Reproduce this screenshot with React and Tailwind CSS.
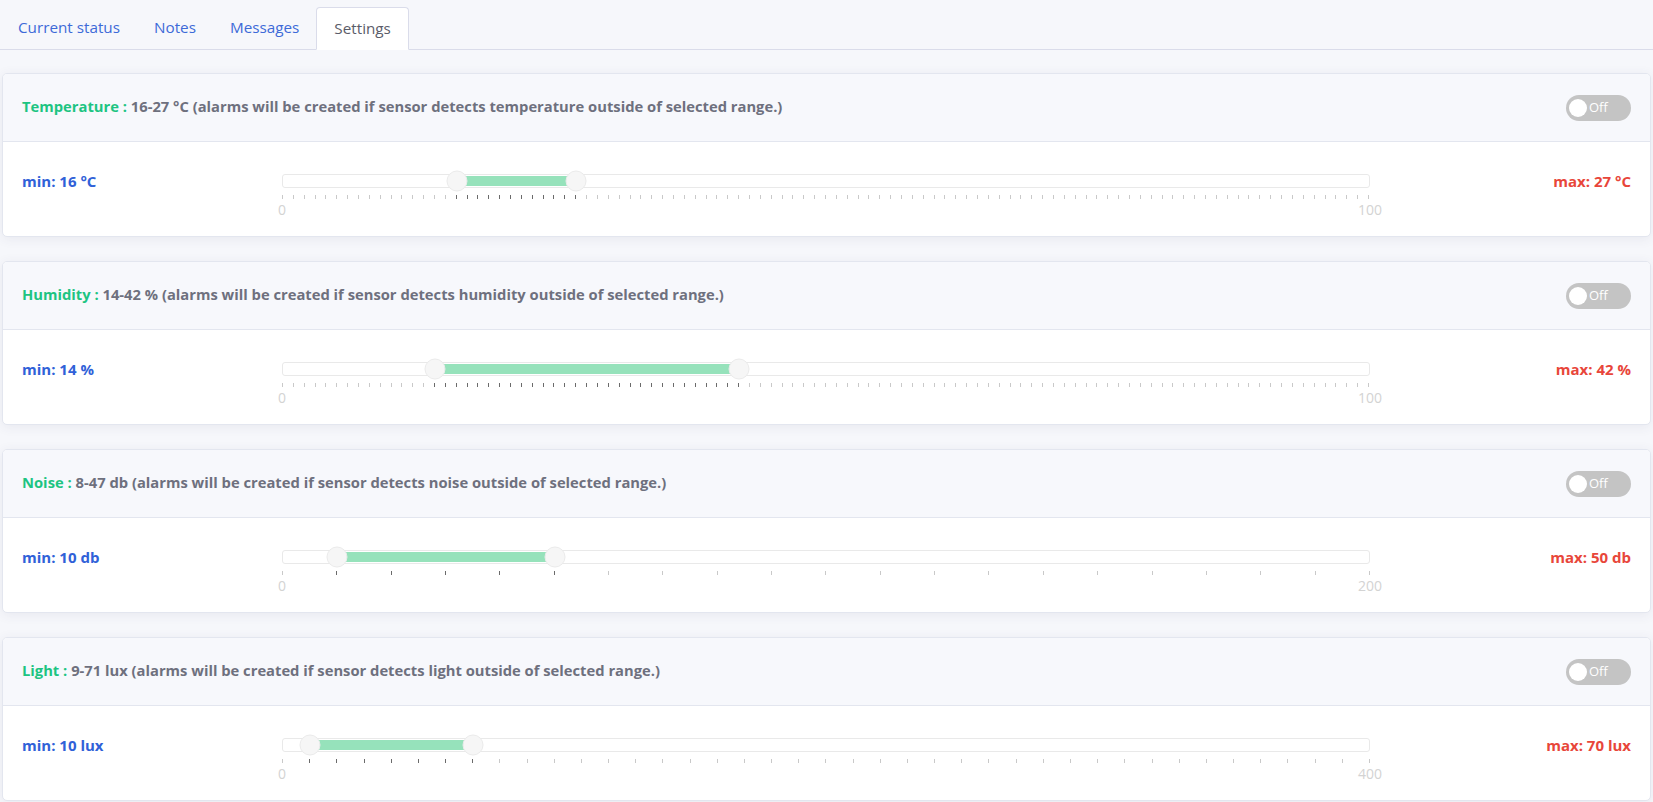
import React from "react";

const sensors = [
  { name: "Temperature", unit: "°C", rangeText: "16-27 °C", word: "temperature", min: 16, max: 27, lo: 16, hi: 27, scaleMax: 100, step: 1 },
  { name: "Humidity", unit: "%", rangeText: "14-42 %", word: "humidity", min: 14, max: 42, lo: 14, hi: 42, scaleMax: 100, step: 1 },
  { name: "Noise", unit: "db", rangeText: "8-47 db", word: "noise", min: 10, max: 50, lo: 10, hi: 50, scaleMax: 200, step: 10 },
  { name: "Light", unit: "lux", rangeText: "9-71 lux", word: "light", min: 10, max: 70, lo: 10, hi: 70, scaleMax: 400, step: 10 },
];

function Toggle() {
  return (
    <div className="flex items-center w-[65px] h-[26px] rounded-full bg-[#c4c4c4] pl-[3px] gap-[2px]">
      <div className="w-[18px] h-[18px] rounded-full bg-white" />
      <span className="text-[13px] text-white leading-none">Off</span>
    </div>
  );
}

function RangeSlider({ s }) {
  const count = Math.round(s.scaleMax / s.step) + 1;
  const ticks = Array.from({ length: count }, (_, i) => i * s.step);
  const loPct = (s.lo / s.scaleMax) * 100;
  const hiPct = (s.hi / s.scaleMax) * 100;
  return (
    <div className="flex-1 flex flex-col">
      <div className="relative h-[14px] border border-[#e9e9e9] rounded-[3px] bg-white">
        <div className="absolute top-[1px] bottom-[1px] bg-[#96e2bb]" style={{ left: `${loPct}%`, width: `${hiPct - loPct}%` }} />
        <div className="absolute top-1/2 w-[21px] h-[21px] -translate-x-1/2 -translate-y-1/2 rounded-full bg-[#f6f6f6] border border-[#ebebeb]" style={{ left: `${loPct}%` }} />
        <div className="absolute top-1/2 w-[21px] h-[21px] -translate-x-1/2 -translate-y-1/2 rounded-full bg-[#f6f6f6] border border-[#ebebeb]" style={{ left: `${hiPct}%` }} />
      </div>
      <div className="flex justify-between mt-[7px] h-[4px]">
        {ticks.map((t) => (
          <div key={t} className={t >= s.lo && t <= s.hi ? "w-px h-full bg-[#6b6b6b]" : "w-px h-full bg-[#c9c9c9]"} />
        ))}
      </div>
      <div className="flex justify-between mt-[4px] text-[14px] leading-none text-[#d3d3d3]">
        <div className="w-0 flex justify-center"><span>0</span></div>
        <div className="w-0 flex justify-center"><span>{s.scaleMax}</span></div>
      </div>
    </div>
  );
}

function SensorCard({ s }) {
  return (
    <div className="bg-white border border-[#e3e6ef] rounded-[5px] overflow-hidden shadow-[0_2px_12px_rgba(60,70,100,0.08)]">
      <div className="h-[68px] bg-[#f7f8fc] border-b border-[#e3e6ef] flex items-center justify-between px-[19px]">
        <div className="text-[14.75px] font-bold text-[#6e707e] -mt-[2px]">
          <span className="text-[#1dc482]">{s.name} :</span> {s.rangeText} (alarms will be created if sensor detects {s.word} outside of selected range.)
        </div>
        <Toggle />
      </div>
      <div className="h-[94px] px-[19px] pt-[32px] flex items-start">
        <div className="w-[260px] h-[14px] flex items-center text-[15px] font-bold text-[#3061d8] leading-none">
          min: {s.min} {s.unit}
        </div>
        <RangeSlider s={s} />
        <div className="w-[261px] h-[14px] flex items-center justify-end text-[15px] font-bold text-[#e8463a] leading-none">
          max: {s.max} {s.unit}
        </div>
      </div>
    </div>
  );
}

export default function App() {
  const tabs = ["Current status", "Notes", "Messages"];
  return (
    <div className="min-h-screen bg-[#f6f7fb] font-['Open_Sans',sans-serif]">
      <div className="flex pt-[7px] border-b border-[#dadcea] pl-px">
        {tabs.map((t) => (
          <div key={t} className="h-[41px] px-[17px] flex items-center text-[15.25px] text-[#3d6ad8]">{t}</div>
        ))}
        <div className="h-[41px] px-[17px] flex items-center text-[15.25px] text-[#5a5c69] bg-white border border-[#dadcea] border-b-white rounded-t-[4px] -mb-px box-content">Settings</div>
      </div>
      <div className="px-[2px] pt-[23px] flex flex-col gap-[24px]">
        {sensors.map((s) => (
          <SensorCard key={s.name} s={s} />
        ))}
      </div>
    </div>
  );
}
